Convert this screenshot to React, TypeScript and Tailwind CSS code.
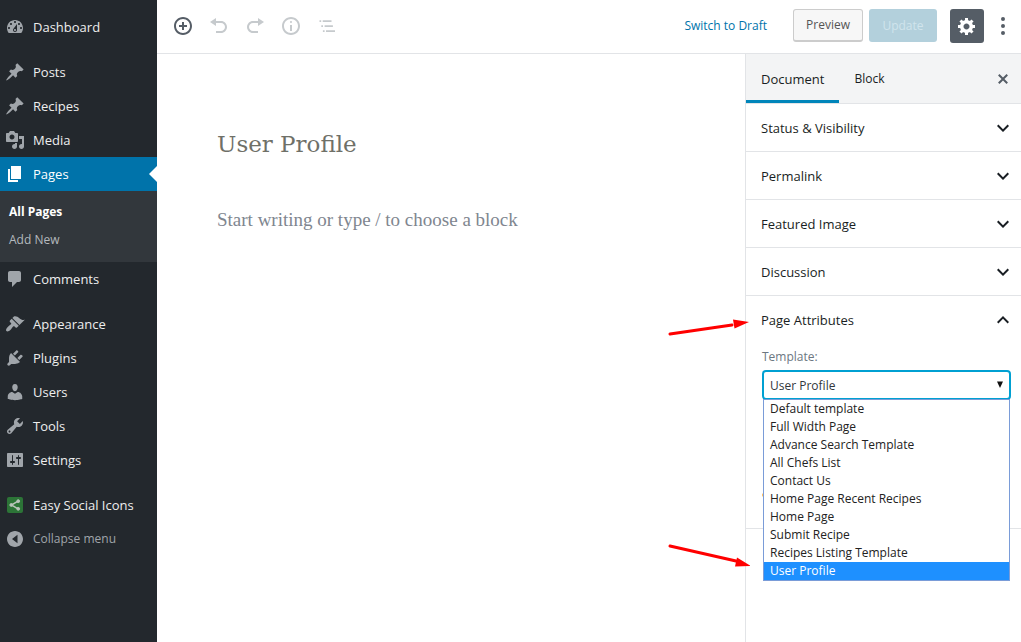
import React, { useState } from "react";

const paths = {
  dashboard:
    "M3.76 16h12.48c1.1-1.37 1.76-3.11 1.76-5 0-4.42-3.58-8-8-8s-8 3.58-8 8c0 1.89.66 3.63 1.76 5zM10 4c.55 0 1 .45 1 1s-.45 1-1 1-1-.45-1-1 .45-1 1-1zM6 6c.55 0 1 .45 1 1s-.45 1-1 1-1-.45-1-1 .45-1 1-1zm8 0c.55 0 1 .45 1 1s-.45 1-1 1-1-.45-1-1 .45-1 1-1zm-5.37 5.55L12 7v6c0 1.1-.9 2-2 2s-2-.9-2-2c0-.57.24-1.08.63-1.45zM4 10c.55 0 1 .45 1 1s-.45 1-1 1-1-.45-1-1 .45-1 1-1zm12 0c.55 0 1 .45 1 1s-.45 1-1 1-1-.45-1-1 .45-1 1-1zm-5 3c0-.55-.45-1-1-1s-1 .45-1 1 .45 1 1 1 1-.45 1-1z",
  pin: "M10.44 3.02l1.82-1.82 6.36 6.35-1.83 1.82c-1.05-.68-2.48-.57-3.41.36l-.75.75c-.92.93-1.04 2.35-.35 3.41l-1.83 1.82-2.41-2.41-2.8 2.79c-.42.42-3.38 2.71-3.8 2.29s1.86-3.39 2.28-3.81l2.79-2.79L4.1 9.36l1.83-1.82c1.05.69 2.48.57 3.4-.36l.75-.75c.93-.92 1.05-2.35.36-3.41z",
  media:
    "M13 11V4c0-.55-.45-1-1-1h-1.67L9 1H5L3.67 3H2c-.55 0-1 .45-1 1v7c0 .55.45 1 1 1h10c.55 0 1-.45 1-1zM7 4.5c1.38 0 2.5 1.12 2.5 2.5S8.38 9.5 7 9.5 4.5 8.38 4.5 7 5.62 4.5 7 4.5zM14 6h5v10.5c0 1.38-1.12 2.5-2.5 2.5S14 17.88 14 16.5s1.12-2.5 2.5-2.5c.17 0 .34.02.5.05V9h-3V6zm-4 8.05V13h2v3.5c0 1.38-1.12 2.5-2.5 2.5S7 17.88 7 16.5 8.12 14 9.5 14c.17 0 .34.02.5.05z",
  page: "M6 15V2h10v13H6zm-1 1h8v2H3V5h2v11z",
  comments:
    "M5 2h9c1.1 0 2 .9 2 2v7c0 1.1-.9 2-2 2h-2l-5 5v-5H5c-1.1 0-2-.9-2-2V4c0-1.1.9-2 2-2z",
  appearance:
    "M14.48 11.06L7.41 3.99l1.5-1.5c.5-.56 2.3-.47 3.51.32 1.21.8 1.43 1.28 2.91 2.1 1.18.64 2.45 1.26 4.45.85zm-.71.71L6.7 4.7 4.93 6.47c-.39.39-.39 1.02 0 1.41l1.06 1.06c.39.39.39 1.03 0 1.42-.6.6-1.43 1.11-2.21 1.69-.35.26-.7.53-1.01.84C1.43 14.23.4 16.08 1.4 17.07c.99 1 2.84-.03 4.18-1.36.31-.31.58-.66.85-1.02.57-.78 1.08-1.61 1.69-2.21.39-.39 1.02-.39 1.41 0l1.06 1.06c.39.39 1.02.39 1.41 0z",
  plugins:
    "M13.11 4.36L9.87 7.6 8 5.73l3.24-3.24c.35-.34 1.05-.2 1.56.32.52.51.66 1.21.31 1.55zm-8 1.77l.91-1.12 9.01 9.01-1.19.84c-.71.71-2.63 1.16-3.82 1.16H6.14L4.9 17.26c-.59.59-1.54.59-2.12 0-.59-.58-.59-1.53 0-2.12l1.24-1.24v-3.88c0-1.13.4-3.19 1.09-3.89zm7.26 3.97l3.24-3.24c.34-.35 1.04-.21 1.55.31.52.51.66 1.21.31 1.55l-3.24 3.25z",
  users:
    "M10 9.25c-2.27 0-2.73-3.44-2.73-3.44C7 4.02 7.82 2 9.97 2c2.16 0 2.98 2.02 2.71 3.81 0 0-.41 3.44-2.68 3.44zm0 2.57L12.72 10c2.39 0 4.52 2.33 4.52 4.53v2.49s-3.65 1.13-7.24 1.13c-3.65 0-7.24-1.13-7.24-1.13v-2.49c0-2.25 1.94-4.48 4.47-4.48z",
  tools:
    "M16.68 9.77c-1.34 1.34-3.3 1.67-4.95.99l-5.41 6.52c-.99.99-2.59.99-3.58 0s-.99-2.59 0-3.57l6.52-5.42c-.68-1.65-.35-3.61.99-4.95 1.28-1.28 3.12-1.62 4.72-1.06l-2.89 2.89 2.82 2.82 2.86-2.87c.53 1.58.18 3.39-1.08 4.65zM3.81 16.21c.4.39 1.04.39 1.43 0 .4-.4.4-1.04 0-1.43-.39-.4-1.03-.4-1.43 0-.39.39-.39 1.03 0 1.43z",
  settings:
    "M18 16V4c0-.55-.45-1-1-1H3c-.55 0-1 .45-1 1v12c0 .55.45 1 1 1h14c.55 0 1-.45 1-1zM8 11h1c.55 0 1 .45 1 1s-.45 1-1 1H8v1.5c0 .28-.22.5-.5.5s-.5-.22-.5-.5V13H6c-.55 0-1-.45-1-1s.45-1 1-1h1V5.5c0-.28.22-.5.5-.5s.5.22.5.5V11zm5-2h-1c-.55 0-1-.45-1-1s.45-1 1-1h1V5.5c0-.28.22-.5.5-.5s.5.22.5.5V7h1c.55 0 1 .45 1 1s-.45 1-1 1h-1v5.5c0 .28-.22.5-.5.5s-.5-.22-.5-.5V9z",
  collapse:
    "M10 2c4.42 0 8 3.58 8 8s-3.58 8-8 8-8-3.58-8-8 3.58-8 8-8zM12.5 5.8L7 10l5.5 4.2z",
  insert:
    "M10 1c-5 0-9 4-9 9s4 9 9 9 9-4 9-9-4-9-9-9zm0 16c-3.9 0-7-3.1-7-7s3.1-7 7-7 7 3.1 7 7-3.1 7-7 7zm1-11H9v3H6v2h3v3h2v-3h3V9h-3V6z",
  undo: "M12 5H7V2L1 6l6 4V7h5c2.2 0 4 1.8 4 4s-1.8 4-4 4H7v2h5c3.3 0 6-2.7 6-6s-2.7-6-6-6z",
  redo: "M8 5h5V2l6 4-6 4V7H8c-2.2 0-4 1.8-4 4s1.8 4 4 4h5v2H8c-3.3 0-6-2.7-6-6s2.7-6 6-6z",
  info: "M9 15h2V9H9v6zm1-10c-.5 0-1 .5-1 1s.5 1 1 1 1-.5 1-1-.5-1-1-1zm0-4c-5 0-9 4-9 9s4 9 9 9 9-4 9-9-4-9-9-9zm0 16c-3.9 0-7-3.1-7-7s3.1-7 7-7 7 3.1 7 7-3.1 7-7 7z",
  outline:
    "M2.5 4.3h1.7V6H2.5zM5.7 4.3h8.8V6H5.7zM4.3 9.2H6v1.7H4.3zM7.6 9.2h8.3v1.7H7.6zM5.9 14.2h1.7v1.7H5.9zM9 14.2h9v1.7H9z",
  gear: "M18 12h-2.18c-.17.7-.44 1.35-.81 1.93l1.54 1.54-2.1 2.1-1.54-1.54c-.58.36-1.23.63-1.91.79V19H8v-2.18c-.68-.16-1.33-.43-1.91-.79l-1.54 1.54-2.12-2.12 1.54-1.54c-.36-.58-.63-1.23-.79-1.91H1V9.03h2.17c.16-.7.44-1.35.8-1.94L2.43 5.55l2.1-2.1 1.54 1.54c.58-.37 1.24-.64 1.93-.81V2h3v2.18c.68.16 1.33.43 1.91.79l1.54-1.54 2.12 2.12-1.54 1.54c.36.59.64 1.24.8 1.94H18V12zm-8.5 1.5c1.66 0 3-1.34 3-3s-1.34-3-3-3-3 1.34-3 3 1.34 3 3 3z",
  more: "M10 1a2 2 0 1 0 0 4 2 2 0 1 0 0-4zm0 7a2 2 0 1 0 0 4 2 2 0 1 0 0-4zm0 7a2 2 0 1 0 0 4 2 2 0 1 0 0-4z",
  close:
    "M14.95 6.46L11.41 10l3.54 3.54-1.41 1.41L10 11.42l-3.53 3.53-1.42-1.42L8.58 10 5.05 6.47l1.42-1.42L10 8.58l3.54-3.53z",
};

type IconName = keyof typeof paths;

function Icon({ name, className = "size-5" }: { name: IconName; className?: string }) {
  return (
    <svg viewBox="0 0 20 20" fill="currentColor" fillRule="evenodd" className={className} aria-hidden="true">
      <path d={paths[name]} />
    </svg>
  );
}

function SocialIcon() {
  return (
    <svg viewBox="0 0 20 20" className="size-5" aria-hidden="true">
      <rect x="2" y="2" width="16" height="16" rx="2" fill="#2c7437" />
      <g fill="#b9c4bb" stroke="#b9c4bb">
        <path d="M13 6.2L6.5 10l6.5 3.8" fill="none" strokeWidth="1.5" />
        <circle cx="13.2" cy="6.2" r="1.4" />
        <circle cx="6.3" cy="10" r="1.4" />
        <circle cx="13.2" cy="13.8" r="1.4" />
      </g>
    </svg>
  );
}

function Chevron({ up = false }: { up?: boolean }) {
  return (
    <svg viewBox="0 0 24 24" fill="#191e23" className="size-6" aria-hidden="true">
      <path
        d={
          up
            ? "M12 8l-6 6 1.41 1.41L12 10.83l4.59 4.58L18 14z"
            : "M7.41 8.59L12 13.17l4.59-4.58L18 10l-6 6-6-6z"
        }
      />
    </svg>
  );
}

function MenuItem({ icon, label }: { icon: IconName; label: string }) {
  return (
    <li>
      <a href="#" className="flex h-[34px] items-center gap-2 pl-[5px] text-[#eee]">
        <span className="text-[#a0a5aa]">
          <Icon name={icon} />
        </span>
        {label}
      </a>
    </li>
  );
}

function AdminMenu() {
  return (
    <nav aria-label="Main menu" className="w-[157px] shrink-0 bg-[#23282d] pt-[10px] text-[13px] leading-5">
      <ul>
        <MenuItem icon="dashboard" label="Dashboard" />
      </ul>
      <ul className="mt-[11px]">
        <MenuItem icon="pin" label="Posts" />
        <MenuItem icon="pin" label="Recipes" />
        <MenuItem icon="media" label="Media" />
        <li>
          <a href="#" className="relative flex h-[34px] items-center gap-2 bg-[#0073aa] pl-[5px] text-white">
            <Icon name="page" />
            Pages
            <svg viewBox="0 0 8 16" className="absolute top-[9px] right-0 h-4 w-2" fill="#fff" aria-hidden="true">
              <path d="M8 0v16L0 8z" />
            </svg>
          </a>
          <ul className="bg-[#32373c] px-[9px] pt-[7px] pb-2 text-[12px]">
            <li>
              <a href="#" className="flex h-7 items-center font-bold text-white">
                All Pages
              </a>
            </li>
            <li>
              <a href="#" className="flex h-7 items-center text-[#b4b9be]">
                Add New
              </a>
            </li>
          </ul>
        </li>
        <MenuItem icon="comments" label="Comments" />
      </ul>
      <ul className="mt-[11px]">
        <MenuItem icon="appearance" label="Appearance" />
        <MenuItem icon="plugins" label="Plugins" />
        <MenuItem icon="users" label="Users" />
        <MenuItem icon="tools" label="Tools" />
        <MenuItem icon="settings" label="Settings" />
      </ul>
      <ul className="mt-[11px]">
        <li>
          <a href="#" className="flex h-[34px] items-center gap-2 pl-[5px] text-[#eee]">
            <SocialIcon />
            <span className="whitespace-nowrap">Easy Social Icons</span>
          </a>
        </li>
        <li>
          <button type="button" className="flex h-[34px] w-full items-center gap-2 pl-[5px] text-[12px] text-[#a0a5aa]">
            <Icon name="collapse" />
            Collapse menu
          </button>
        </li>
      </ul>
    </nav>
  );
}

function EditorHeader() {
  return (
    <header className="flex h-[54px] shrink-0 items-center justify-between border-b border-[#e2e4e7] pr-2 pb-0.5 pl-4">
      <div className="flex gap-4 text-[#c6cacd]">
        <button type="button" aria-label="Add block" className="text-[#555d66]">
          <Icon name="insert" />
        </button>
        <button type="button" aria-label="Undo">
          <Icon name="undo" />
        </button>
        <button type="button" aria-label="Redo">
          <Icon name="redo" />
        </button>
        <button type="button" aria-label="Content structure">
          <Icon name="info" />
        </button>
        <button type="button" aria-label="Block navigation">
          <Icon name="outline" />
        </button>
      </div>
      <div className="flex items-center text-[12px]">
        <button type="button" className="mr-[26px] text-[#0073aa]">
          Switch to Draft
        </button>
        <button
          type="button"
          className="mr-1.5 flex h-[33px] w-[70px] items-center justify-center rounded-[3px] border border-b-2 border-[#ccc] bg-[#f7f7f7] text-[#555]"
        >
          Preview
        </button>
        <button
          type="button"
          className="mr-[13px] flex h-[33px] w-[68px] items-center justify-center rounded-[3px] bg-[#b3d0dc] text-[#d0e4ec]"
        >
          Update
        </button>
        <button
          type="button"
          aria-label="Settings"
          className="mr-[9px] flex size-[34px] items-center justify-center rounded-[3px] bg-[#555d66] text-white"
        >
          <Icon name="gear" />
        </button>
        <button type="button" aria-label="More options" className="text-[#555d66]">
          <Icon name="more" />
        </button>
      </div>
    </header>
  );
}

const templates = [
  "Default template",
  "Full Width Page",
  "Advance Search Template",
  "All Chefs List",
  "Contact Us",
  "Home Page Recent Recipes",
  "Home Page",
  "Submit Recipe",
  "Recipes Listing Template",
  "User Profile",
];

function PageAttributes() {
  const [template, setTemplate] = useState("User Profile");
  return (
    <section className="relative border-b border-[#e2e4e7] pb-[30px]">
      <button
        type="button"
        aria-expanded="true"
        className="flex h-12 w-full items-center justify-between pr-1.5 pl-[15px] font-medium text-[#191e23]"
      >
        Page Attributes
        <Chevron up />
      </button>
      <div className="pr-[10px] pl-4 text-[12px]">
        <label htmlFor="template" className="flex h-[26px] items-center text-[#6c7781]">
          Template:
        </label>
        <div className="relative">
          <select
            id="template"
            value={template}
            onChange={(e) => setTemplate(e.target.value)}
            className="block h-[30px] w-full appearance-none rounded-[4px] border-2 border-[#00a0d2] bg-white px-1.5 pt-0.5 text-[#32373c] outline-none"
          >
            {templates.map((name) => (
              <option key={name}>{name}</option>
            ))}
          </select>
          <svg
            viewBox="0 0 8 8"
            className="pointer-events-none absolute top-[11px] right-[7px] size-2"
            fill="#111"
            aria-hidden="true"
          >
            <path d="M1 0.5h6L4 7z" />
          </svg>
          <ul
            role="listbox"
            aria-label="Template"
            className="absolute inset-x-px top-[29px] z-10 border border-[#7a9cd8] bg-white"
          >
            {templates.map((name) => (
              <li
                key={name}
                role="option"
                aria-selected={name === template}
                onClick={() => setTemplate(name)}
                className={
                  name === template
                    ? "h-[18px] bg-[#1e90ff] px-1.5 leading-[18px] text-white"
                    : "h-[18px] px-1.5 leading-[18px] text-[#222]"
                }
              >
                {name}
              </li>
            ))}
          </ul>
        </div>
        <div className="mt-[93px] mb-px h-1 w-1 rounded-full bg-[#ffb74d]" />
      </div>
      <svg viewBox="0 0 84 20" className="absolute top-[20px] right-[271px] h-5 w-[84px]" aria-hidden="true">
        <path d="M4 18L66 9" stroke="#f00" strokeWidth="3" strokeLinecap="round" />
        <path d="M83 6L67 3.4l1.5 9z" fill="#f00" />
      </svg>
      <svg viewBox="0 0 84 26" className="absolute top-[246px] right-[271px] h-[26px] w-[84px]" aria-hidden="true">
        <path d="M4 4L70 19" stroke="#f00" strokeWidth="3" strokeLinecap="round" />
        <path d="M85 24L71 15.5l-2 9z" fill="#f00" />
      </svg>
    </section>
  );
}

function SettingsSidebar() {
  return (
    <aside className="w-[276px] shrink-0 border-l border-[#e2e4e7]">
      <div className="flex h-[50px] items-stretch border-b border-[#e2e4e7] bg-[#f3f4f5] pr-2 text-[#191e23]">
        <button type="button" className="border-b-3 border-[#0085ba] px-[15px] pt-[3px] font-medium">
          Document
        </button>
        <button type="button" className="px-[15px] text-[12px]">
          Block
        </button>
        <button type="button" aria-label="Close settings" className="ml-auto text-[#555d66]">
          <Icon name="close" />
        </button>
      </div>
      {["Status & Visibility", "Permalink", "Featured Image", "Discussion"].map((title) => (
        <section key={title} className="h-12 border-b border-[#e2e4e7]">
          <button
            type="button"
            aria-expanded="false"
            className="flex h-full w-full items-center justify-between pr-1.5 pl-[15px] font-medium text-[#191e23]"
          >
            {title}
            <Chevron />
          </button>
        </section>
      ))}
      <PageAttributes />
    </aside>
  );
}

export default function App() {
  return (
    <div className="flex min-h-screen bg-white font-['Open_Sans',sans-serif] text-[13px] leading-5">
      <AdminMenu />
      <div className="flex min-w-0 flex-1 flex-col">
        <EditorHeader />
        <div className="flex flex-1">
          <main className="min-w-0 flex-1 px-[60px] pt-[72px]">
            <h1 className="font-['DejaVu_Serif',serif] text-[23px] leading-9 text-[#6f7068]">User Profile</h1>
            <p className="mt-11 font-['Liberation_Serif',serif] text-[19px] leading-7 text-[#80868f]">
              Start writing or type / to choose a block
            </p>
          </main>
          <SettingsSidebar />
        </div>
      </div>
    </div>
  );
}
